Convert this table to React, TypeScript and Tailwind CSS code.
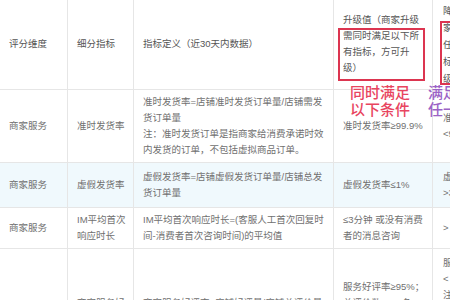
import React from "react";

const FONT = { fontFamily: '"Liberation Sans", "Noto Sans CJK SC", sans-serif' };

interface Row {
  dim: string;
  item: React.ReactNode;
  def: React.ReactNode;
  up: React.ReactNode;
  down: React.ReactNode;
  shade?: boolean;
}

const ROWS: Row[] = [
  {
    dim: "商家服务",
    item: "准时发货率",
    def: (
      <>
        准时发货率=店铺准时发货订单量/店铺需发货订单量
        <br />
        注：准时发货订单是指商家给消费承诺时效内发货的订单，不包括虚拟商品订单。
      </>
    ),
    up: "准时发货率≥99.9%",
    down: (
      <>
        准时发货率
        <br />
        &lt;98%
      </>
    ),
  },
  {
    dim: "商家服务",
    item: "虚假发货率",
    def: "虚假发货率=店铺虚假发货订单量/店铺总发货订单量",
    up: "虚假发货率≤1%",
    down: (
      <>
        虚假发货率
        <br />
        &gt;3%
      </>
    ),
    shade: true,
  },
  {
    dim: "商家服务",
    item: "IM平均首次响应时长",
    def: "IM平均首次响应时长=(客服人工首次回复时间-消费者首次咨询时间)的平均值",
    up: (
      <>
        ≤3分钟 或没有消费
        <br />
        者的消息咨询
      </>
    ),
    down: "> 3分钟",
  },
  {
    dim: "商家服务",
    item: "商家服务好评率",
    def: "商家服务好评率=店铺好评量/店铺总评价量（近30天）",
    up: (
      <>
        服务好评率≥95%；
        <br />
        总评价数≥100条；
        <br />
        差评数≤5条；
        <br />
        无违规记录
      </>
    ),
    down: (
      <>
        服务好评
        <br />
        &lt; 90%
        <br />
        注：总评
        <br />
        价数不足
        <br />
        100条时
        <br />
        不考核
        <br />
        此项
      </>
    ),
  },
];

export default function App() {
  const cell = "border border-[#e6e6e6] pl-[9px] pr-[5px] py-[4px] align-middle text-left";
  const last = "border border-[#e6e6e6] pl-[10px] align-middle text-left";

  return (
    <div className="relative w-[450px] h-[300px] overflow-hidden bg-white" style={FONT}>
      <table className="table-fixed border-collapse w-[508px] -ml-px text-[9.5px] leading-[16px] text-[#707070]">
        <colgroup>
          <col className="w-[68px]" />
          <col className="w-[66px]" />
          <col className="w-[200px]" />
          <col className="w-[99px]" />
          <col className="w-[75px]" />
        </colgroup>
        <thead>
          <tr className="h-[89px] text-[#555]">
            <th className={`${cell} font-normal border-t-0`}>评分维度</th>
            <th className={`${cell} font-normal border-t-0`}>细分指标</th>
            <th className={`${cell} font-normal border-t-0`}>指标定义（近30天内数据）</th>
            <th className={`${cell} font-normal border-t-0 whitespace-nowrap`}>
              升级值（商家升级
              <br />
              需同时满足以下所
              <br />
              有指标，方可升
              <br />
              级）
            </th>
            <th className={`${last} border-t-0 py-0 font-normal leading-[17px]`}>
              降级值（商
              <br />
              家满足以下
              <br />
              任一下列指
              <br />
              标即可降
              <br />
              级）
            </th>
          </tr>
        </thead>
        <tbody>
          {ROWS.map((r, i) => (
            <tr key={i} className={r.shade ? "bg-[#f0f9fd]" : "bg-white"}>
              <td className={cell}>{r.dim}</td>
              <td className={cell}>{r.item}</td>
              <td className={cell}>{r.def}</td>
              <td className={`${cell} whitespace-nowrap`}>{r.up}</td>
              <td className={`${last} py-[6px]`}>{r.down}</td>
            </tr>
          ))}
        </tbody>
      </table>

      {/* annotations */}
      <div className="absolute left-[338px] top-[28px] w-[87px] h-[53px] border-2 border-[#dc3550]" />
      <div className="absolute left-[440px] top-[21px] w-[30px] h-[64px] border-2 border-[#dc3550]" />
      <div
        className="absolute left-[350px] top-[83px] whitespace-nowrap font-medium text-[15px] leading-[17px] text-[#e8455f]"
        style={{ fontFamily: '"Noto Sans CJK SC", sans-serif' }}
      >
        同时满足
        <br />
        以下条件
      </div>
      <div
        className="absolute left-[428px] top-[83px] whitespace-nowrap font-medium text-[15px] leading-[17px] text-[#9b62c6]"
        style={{ fontFamily: '"Noto Sans CJK SC", sans-serif' }}
      >
        满足
        <br />
        任一
      </div>
    </div>
  );
}
